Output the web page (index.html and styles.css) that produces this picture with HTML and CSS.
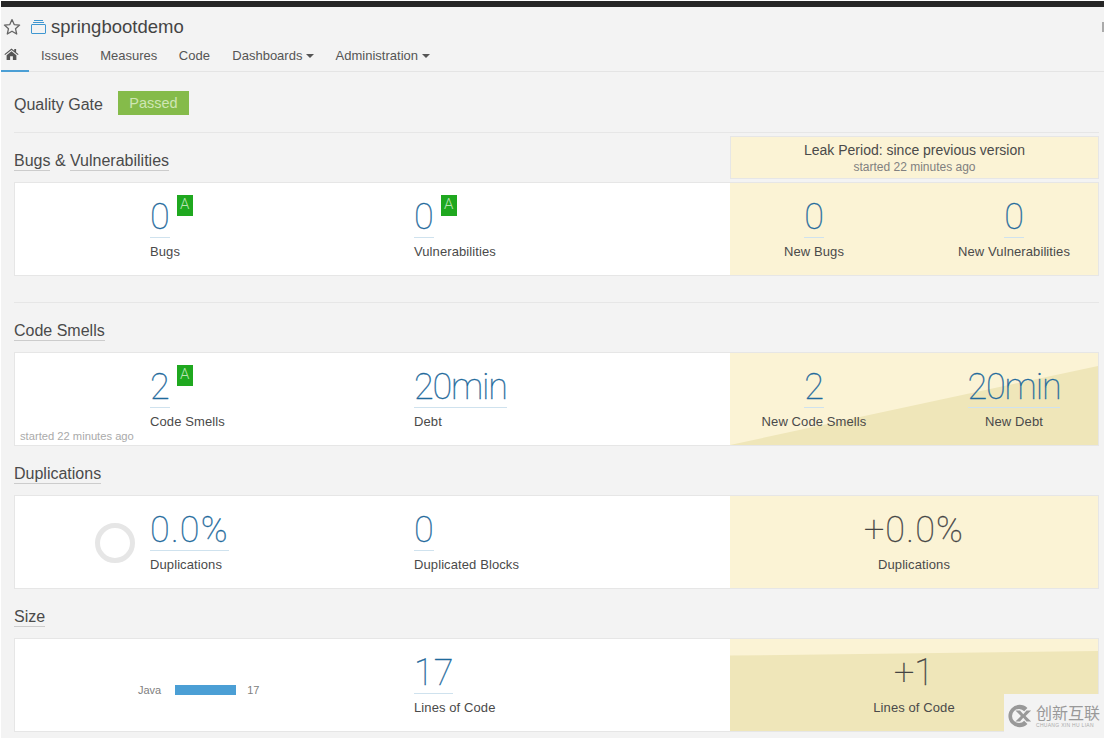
FILE: index.html
```html
<!DOCTYPE html>
<html lang="en">
<head>
  <meta charset="UTF-8">
  <title>springbootdemo</title>
  <link rel="stylesheet" href="styles.css">
</head>
<body>

<div class="topbar"></div>

<div class="project-head">
  <svg class="star" viewBox="0 0 18 18" width="18" height="18"><path d="M9 1.600l2.200 5 5.400.5-4.100 3.600 1.200 5.300L9 13.200 4.300 16l1.200-5.300L1.400 7.100l5.400-.5z" fill="none" stroke="#666" stroke-width="1.300" stroke-linejoin="round"/></svg>
  <svg class="qualifier" viewBox="0 0 15 14" width="15" height="14"><path d="M3 .5h9M2 2.500h11" fill="none" stroke="#3f97d1"/><rect x=".5" y="4.500" width="14" height="9" rx=".5" fill="none" stroke="#3f97d1"/></svg>
  <span class="project-name">springbootdemo</span>
  <span class="cut-off"></span>
</div>

<nav class="tabs">
  <a class="tab tab-home"><svg viewBox="0 0 16 13" width="15" height="12"><path d="M8 .5L.3 6.800l.8.9L8 2.200l6.900 5.500.8-.9L13 4.600V1h-2v2L8 .5zM2.700 7.800V13h3.800V9h3v4h3.800V7.800L8 3.500z" fill="#555"/></svg></a>
  <a class="tab">Issues</a>
  <a class="tab">Measures</a>
  <a class="tab">Code</a>
  <a class="tab tab-menu">Dashboards <i class="caret"></i></a>
  <a class="tab">Administration <i class="caret"></i></a>
</nav>

<main class="overview">

  <div class="gate">
    <span class="gate-label">Quality Gate</span>
    <span class="gate-badge">Passed</span>
  </div>

  <div class="domain-head domain-head-first">
    <h2 class="domain-title"><u>Bugs</u> &amp; <u>Vulnerabilities</u></h2>
    <div class="leak-title">
      <div class="leak-name">Leak Period: since previous version</div>
      <div class="leak-date">started 22 minutes ago</div>
    </div>
  </div>
  <section class="panel">
    <div class="nutshell">
      <div class="measure">
        <div class="value-row"><span class="value">0</span><span class="rating">A</span></div>
        <div class="label">Bugs</div>
      </div>
      <div class="measure">
        <div class="value-row"><span class="value">0</span><span class="rating">A</span></div>
        <div class="label">Vulnerabilities</div>
      </div>
    </div>
    <div class="leak">
      <div class="leak-measure"><span class="value">0</span><div class="label">New Bugs</div></div>
      <div class="leak-measure"><span class="value">0</span><div class="label">New Vulnerabilities</div></div>
    </div>
  </section>

  <hr class="divider">

  <div class="domain-head"><h2 class="domain-title"><u>Code Smells</u></h2></div>
  <section class="panel">
    <div class="nutshell">
      <div class="measure">
        <div class="value-row"><span class="value">2</span><span class="rating">A</span></div>
        <div class="label">Code Smells</div>
      </div>
      <div class="measure">
        <div class="value-row"><span class="value value-debt">20min</span></div>
        <div class="label">Debt</div>
      </div>
      <span class="started">started 22 minutes ago</span>
    </div>
    <div class="leak leak-steep">
      <div class="leak-measure"><span class="value">2</span><div class="label">New Code Smells</div></div>
      <div class="leak-measure"><span class="value value-debt">20min</span><div class="label">New Debt</div></div>
    </div>
  </section>

  <div class="domain-head"><h2 class="domain-title"><u>Duplications</u></h2></div>
  <section class="panel">
    <div class="nutshell">
      <div class="measure">
        <div class="donut"></div>
        <div class="value-row"><span class="value value-percent">0.0%</span></div>
        <div class="label">Duplications</div>
      </div>
      <div class="measure">
        <div class="value-row"><span class="value">0</span></div>
        <div class="label">Duplicated Blocks</div>
      </div>
    </div>
    <div class="leak leak-single">
      <div class="leak-measure"><span class="value value-plain value-percent">+0.0%</span><div class="label">Duplications</div></div>
    </div>
  </section>

  <div class="domain-head"><h2 class="domain-title"><u>Size</u></h2></div>
  <section class="panel">
    <div class="nutshell">
      <div class="languages">
        <span class="lang-name">Java</span>
        <span class="lang-bar"></span>
        <span class="lang-count">17</span>
      </div>
      <div class="measure">
        <div class="value-row"><span class="value">17</span></div>
        <div class="label">Lines of Code</div>
      </div>
    </div>
    <div class="leak leak-single leak-flat">
      <div class="leak-measure"><span class="value value-plain">+1</span><div class="label">Lines of Code</div></div>
    </div>
  </section>

</main>

<div class="watermark">
  <svg viewBox="0 0 28 28" width="26" height="26"><path d="M22 5.500A12 12 0 1 0 22 22.500L18.500 19A7.500 7.500 0 1 1 18.500 9z" fill="#999"/><path d="M9 8h5l3.500 4L21 8h5l-6 6 6 6h-5l-3.500-4-3.500 4H9l6-6z" fill="#999"/></svg>
  <div class="watermark-text">
    <div class="watermark-cn">创新互联</div>
    <div class="watermark-en">CHUANG XIN HU LIAN</div>
  </div>
</div>

</body>
</html>
```

FILE: styles.css
```css
* { box-sizing: border-box; margin: 0; padding: 0; }
html, body { height: 738px; overflow: hidden; }
body {
  position: relative;
  font-family: "Liberation Sans", Arial, sans-serif;
  font-size: 13px;
  color: #4a4a4a;
  background: #f3f3f3;
  border-left: 1px solid #fff;
  border-top: 1px solid #fff;
}
.topbar { height: 6px; background: #262626; }

.project-head {
  display: flex;
  align-items: center;
  height: 35px;
  padding: 5px 0 0 2px;
}
.star { margin-right: 10px; }
.qualifier { margin-right: 5px; }
.project-name { font-size: 18.500px; color: #444; }
.cut-off { margin-left: auto; width: 2px; height: 10px; background: #aaa; }

.tabs {
  display: flex;
  height: 30px;
  border-bottom: 1px solid #e4e4e4;
}
.tab {
  display: flex;
  align-items: center;
  padding: 0 10.800px 2px;
  height: 29px;
  color: #555;
  white-space: pre;
}
.tab-menu { margin-left: .8px; }
.tab-home {
  width: 28px;
  padding: 0 0 5px 3px;
  margin-right: 1.200px;
  border-bottom: 2px solid #4b9fd5;
  height: 30px;
}
.caret {
  display: inline-block;
  width: 0;
  height: 0;
  border-left: 4px solid transparent;
  border-right: 4px solid transparent;
  border-top: 4px solid #555;
}

.overview { padding: 0 5px 0 13px; }

.gate {
  display: flex;
  align-items: center;
  height: 61px;
  border-bottom: 1px solid #e6e6e6;
  padding-top: 2px;
}
.gate-label { font-size: 16px; margin-right: 15px; padding-top: 3px; }
.gate-badge {
  width: 71px;
  height: 24px;
  line-height: 25px;
  text-align: center;
  font-size: 14.500px;
  color: #cfe6b4;
  background: #85bb4a;
}

.domain-head {
  display: flex;
  align-items: flex-end;
  justify-content: space-between;
  height: 49px;
  padding-bottom: 12px;
}
.domain-head-first {
  height: 49px;
  padding-bottom: 3px;
}
.domain-title { font-size: 16px; font-weight: normal; line-height: 18px; }
.domain-head-first .domain-title { margin-bottom: 9px; }
.domain-title u {
  text-decoration: none;
  border-bottom: 1px solid #ccc;
  padding-bottom: 1px;
}
.leak-title {
  width: 369px;
  height: 43px;
  text-align: center;
  background: #fbf3d5;
  border: 1px solid #e6e6e6;
  padding-top: 6px;
}
.leak-name { font-size: 14px; line-height: 15px; }
.leak-date { font-size: 12px; line-height: 15px; margin-top: 2px; color: #808080; }

.panel {
  display: flex;
  height: 94px;
  background: #fff;
  border: 1px solid #e6e6e6;
}
.nutshell {
  position: relative;
  display: flex;
  width: 715px;
  padding-left: 135px;
}
.measure { position: relative; width: 264px; }
.value-row { display: flex; align-items: flex-start; height: 55px; padding-top: 15px; }
.value {
  display: inline-block;
  height: 40px;
  font-family: Roboto, "Liberation Sans", sans-serif;
  font-size: 36px;
  font-weight: 100;
  line-height: 38px;
  color: #1f6a9c;
  -webkit-text-stroke: .3px #1f6a9c;
  border-bottom: 1px solid #cfe2ee;
  text-align: center;
}
.value-debt { letter-spacing: -1.200px; }
.value-percent { letter-spacing: 1.200px; }
.value-plain { color: #444; -webkit-text-stroke: .3px #444; border-bottom: 0; }
.rating {
  width: 16px;
  height: 21px;
  margin: -3px 0 0 7px;
  line-height: 19px;
  text-align: center;
  font-family: Roboto, sans-serif;
  font-weight: 300;
  font-size: 15px;
  color: #b7e3b2;
  background: #1fa81f;
}
.label { margin-top: 6px; line-height: 15px; letter-spacing: .1px; color: #4a4a4a; }
.started {
  position: absolute;
  left: 5px;
  bottom: 3px;
  font-size: 11.200px;
  color: #aaa;
}
.donut {
  position: absolute;
  left: -55px;
  top: 27px;
  width: 40px;
  height: 40px;
  border: 5px solid #e6e6e6;
  border-radius: 50%;
}
.languages {
  display: flex;
  align-items: center;
  flex: none;
  width: 276px;
  margin-left: -12px;
  padding-top: 10px;
  font-size: 11px;
  color: #808080;
}
.lang-name { margin-right: 14px; }
.lang-bar { width: 61px; height: 10px; background: #4b9fd5; margin-right: 11px; }

.leak {
  position: relative;
  display: grid;
  grid-template-columns: 168px 168px;
  column-gap: 32px;
  flex: 1;
  background: #fbf3d5;
  margin: -1px -1px -1px 0;
  border: 1px solid #e6e6e6;
  border-left: 0;
}
.leak-single { grid-template-columns: 1fr; }
.leak-steep::before,
.leak-flat::before {
  content: "";
  position: absolute;
  inset: 0;
  background: #efe6b9;
}
.leak-steep::before { clip-path: polygon(0 100%, 100% 14%, 100% 100%); }
.leak-flat::before { clip-path: polygon(0 18%, 100% 13%, 100% 100%, 0 100%); }
.leak-measure { position: relative; text-align: center; padding-top: 15px; }
.leak-measure .label { margin-top: 6px; }

.divider {
  height: 1px;
  margin-top: 26px;
  border: 0;
  background: #e6e6e6;
}

.watermark {
  position: absolute;
  right: 0;
  bottom: 0;
  display: flex;
  align-items: center;
  gap: 3px;
  width: 100px;
  height: 44px;
  padding-left: 3px;
  background: #f3f3f3;
}
.watermark-cn {
  font-family: "Noto Sans CJK SC", sans-serif;
  font-size: 16px;
  line-height: 16px;
  color: #999;
}
.watermark-en { font-size: 5px; line-height: 6px; margin-top: 2px; letter-spacing: .3px; color: #aaa; white-space: nowrap; }
```
